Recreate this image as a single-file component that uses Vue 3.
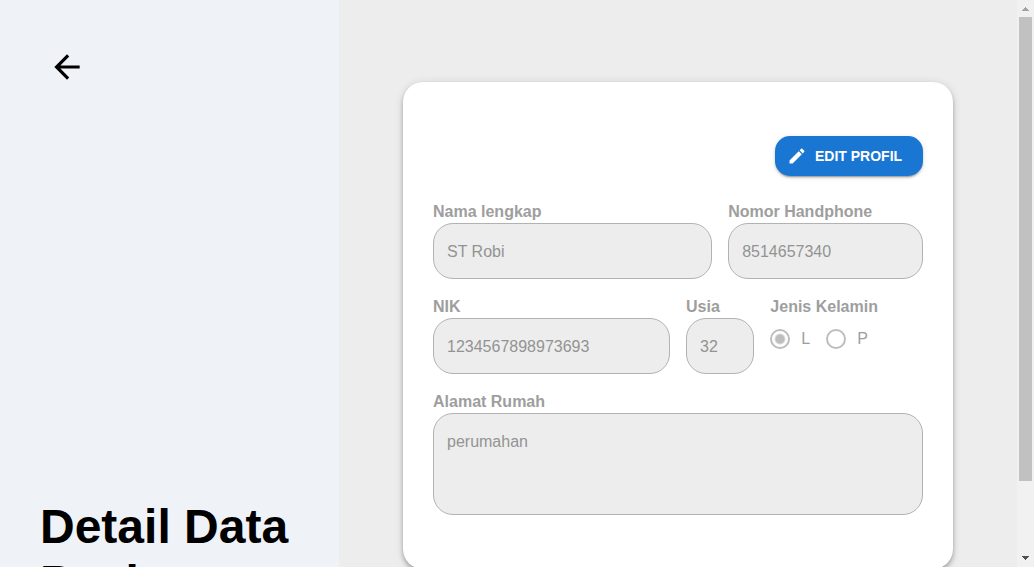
<script setup>
import { ref } from 'vue'

const name = ref('ST Robi')
const phone = ref('8514657340')
const nik = ref('1234567898973693')
const age = ref('32')
const gender = ref('L')
const address = ref('perumahan')
</script>

<template>
  <div class="screen">
    <div class="page">
      <aside class="side">
        <button class="back" type="button" aria-label="Kembali">
          <svg viewBox="0 0 24 24" aria-hidden="true">
            <path d="M20 11H7.83l5.59-5.59L12 4l-8 8 8 8 1.41-1.41L7.83 13H20v-2z" />
          </svg>
        </button>
        <h1 class="title">Detail Data Pasien</h1>
      </aside>

      <main class="content">
        <form class="card" @submit.prevent>
          <button class="edit" type="button">
            <svg viewBox="0 0 24 24" aria-hidden="true">
              <path d="M3 17.25V21h3.75L17.81 9.94l-3.75-3.75L3 17.25zM20.71 7.04c.39-.39.39-1.02 0-1.41l-2.34-2.34a.9959.9959 0 0 0-1.41 0l-1.83 1.83 3.75 3.75 1.83-1.83z" />
            </svg>
            <span>EDIT PROFIL</span>
          </button>

          <div class="fields">
            <div class="field span-7">
              <label for="name">Nama lengkap</label>
              <input id="name" v-model="name" class="box" type="text" disabled />
            </div>
            <div class="field span-5">
              <label for="phone">Nomor Handphone</label>
              <input id="phone" v-model="phone" class="box" type="text" disabled />
            </div>
            <div class="field span-6">
              <label for="nik">NIK</label>
              <input id="nik" v-model="nik" class="box" type="text" disabled />
            </div>
            <div class="field span-2">
              <label for="age">Usia</label>
              <input id="age" v-model="age" class="box" type="text" disabled />
            </div>
            <fieldset class="field span-4">
              <legend>Jenis Kelamin</legend>
              <div class="radios">
                <label class="option" for="gender-l">
                  <input id="gender-l" v-model="gender" type="radio" name="gender" value="L" disabled />
                  L
                </label>
                <label class="option" for="gender-p">
                  <input id="gender-p" v-model="gender" type="radio" name="gender" value="P" disabled />
                  P
                </label>
              </div>
            </fieldset>
            <div class="field span-12">
              <label for="address">Alamat Rumah</label>
              <textarea id="address" v-model="address" class="box area" disabled></textarea>
            </div>
          </div>
        </form>
      </main>
    </div>

    <div class="scrollbar" aria-hidden="true">
      <svg class="arrow up" viewBox="0 0 17 17"><path d="M8 7h1v1h1v1h1v1h1v1H5v-1h1V9h1V8h1z" /></svg>
      <div class="track"><div class="thumb"></div></div>
      <svg class="arrow down" viewBox="0 0 17 17"><path d="M5 6h7v1h-1v1h-1v1H9v1H8V9H7V8H6V7H5z" /></svg>
    </div>
  </div>
</template>

<style>
body {
  margin: 0;
  overflow: hidden;
}
</style>

<style scoped>
* {
  box-sizing: border-box;
}

.screen {
  display: flex;
  height: 100vh;
  overflow: hidden;
  background: #ededed;
  font-family: "Liberation Sans", Arial, sans-serif;
  font-size: 16px;
}

.page {
  flex: 1;
  min-width: 0;
  display: grid;
  grid-template-columns: minmax(0, 1fr) minmax(0, 2fr);
  align-self: flex-start;
  min-height: 100vh;
}

.side {
  display: flex;
  flex-direction: column;
  justify-content: space-between;
  align-items: flex-start;
  padding: 40px;
  background: #eff3f8;
}

.back {
  display: flex;
  padding: 8px;
  border: 0;
  background: none;
  color: #000;
}

.back svg {
  width: 38px;
  height: 38px;
  fill: currentColor;
}

.title {
  margin: 0;
  font-size: 48px;
  line-height: 56px;
  font-weight: 700;
  color: #000;
}

.content {
  display: flex;
  justify-content: center;
  align-items: center;
  padding: 82px 16px;
}

.card {
  display: flex;
  flex-direction: column;
  gap: 24px;
  width: 100%;
  max-width: 550px;
  padding: 54px 30px;
  border-radius: 20px;
  background: #fff;
  box-shadow: 0 2px 4px -1px rgba(0, 0, 0, 0.2), 0 4px 5px 0 rgba(0, 0, 0, 0.14), 0 1px 10px 0 rgba(0, 0, 0, 0.12);
}

.edit {
  display: flex;
  align-items: center;
  align-self: flex-end;
  gap: 8px;
  min-width: 148px;
  height: 40px;
  padding: 0 12px;
  border: 0;
  border-radius: 15px;
  background: #1976d2;
  color: #fff;
  font-family: inherit;
  font-size: 14px;
  font-weight: 700;
  box-shadow: 0 3px 1px -2px rgba(0, 0, 0, 0.2), 0 2px 2px 0 rgba(0, 0, 0, 0.14), 0 1px 5px 0 rgba(0, 0, 0, 0.12);
}

.edit svg {
  width: 20px;
  height: 20px;
  fill: currentColor;
}

.fields {
  display: grid;
  grid-template-columns: repeat(12, minmax(0, 1fr));
  gap: 16px;
}

.field {
  min-width: 0;
  margin: 0;
  padding: 0;
  border: 0;
  color: #9e9e9e;
}

.field > label,
.field > legend {
  display: block;
  padding: 0;
  line-height: 23px;
  font-weight: 700;
  white-space: nowrap;
}

.span-2 { grid-column: span 2; }
.span-4 { grid-column: span 4; }
.span-5 { grid-column: span 5; }
.span-6 { grid-column: span 6; }
.span-7 { grid-column: span 7; }
.span-12 { grid-column: span 12; }

.box {
  display: block;
  width: 100%;
  height: 56px;
  margin: 0;
  padding: 16px 13px 15px;
  border: 1px solid #b2b2b2;
  border-radius: 20px;
  background: #ededed;
  color: #939393;
  font-family: inherit;
  font-size: 16px;
  line-height: 23px;
}

.area {
  height: 102px;
  resize: none;
}

.radios {
  display: flex;
  align-items: center;
  gap: 16px;
  height: 42px;
}

.option {
  display: flex;
  align-items: center;
  gap: 11px;
  line-height: 24px;
}

.option input {
  appearance: none;
  width: 20px;
  height: 20px;
  margin: 0;
  border: 2px solid #bdbdbd;
  border-radius: 50%;
}

.option input:checked {
  background: radial-gradient(circle, #bdbdbd 4px, transparent 6px);
}

.scrollbar {
  display: flex;
  flex-direction: column;
  width: 17px;
  background: #f1f1f1;
}

.arrow {
  width: 17px;
  height: 17px;
}

.up { fill: #a3a3a3; }
.down { fill: #505050; }

.track {
  flex: 1;
  padding: 0 2px;
}

.thumb {
  height: 87%;
  background: #c1c1c1;
}
</style>
